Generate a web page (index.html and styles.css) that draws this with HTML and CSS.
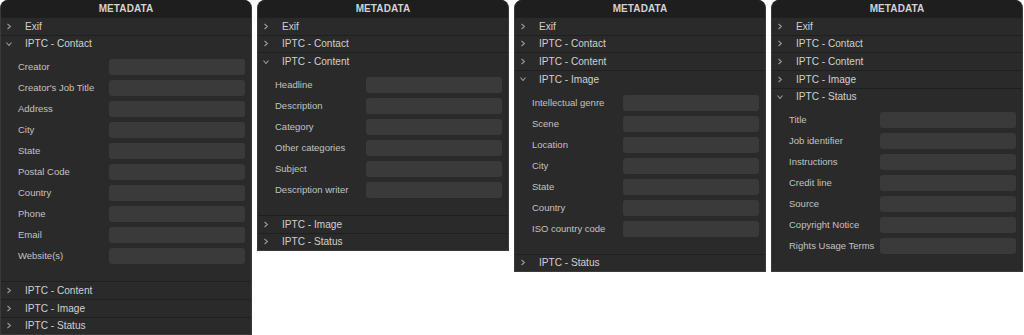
FILE: index.html
```html
<!DOCTYPE html>
<html>
<head>
<meta charset="utf-8">
<link rel="stylesheet" href="styles.css">
</head>
<body>
<div class="wrap">

  <section class="panel">
    <div class="hdr">METADATA</div>
    <div class="row"><svg class="chev" viewBox="0 0 4 6"><path d="M0.5 0.5 L3.5 3 L0.5 5.5"/></svg><span>Exif</span></div>
    <div class="row"><svg class="chev down" viewBox="0 0 6 4"><path d="M0.5 0.5 L3 3.5 L5.5 0.5"/></svg><span>IPTC - Contact</span></div>
    <div class="fields">
      <label>Creator</label><div class="box"></div>
      <label>Creator's Job Title</label><div class="box"></div>
      <label>Address</label><div class="box"></div>
      <label>City</label><div class="box"></div>
      <label>State</label><div class="box"></div>
      <label>Postal Code</label><div class="box"></div>
      <label>Country</label><div class="box"></div>
      <label>Phone</label><div class="box"></div>
      <label>Email</label><div class="box"></div>
      <label>Website(s)</label><div class="box"></div>
    </div>
    <div class="row"><svg class="chev" viewBox="0 0 4 6"><path d="M0.5 0.5 L3.5 3 L0.5 5.5"/></svg><span>IPTC - Content</span></div>
    <div class="row"><svg class="chev" viewBox="0 0 4 6"><path d="M0.5 0.5 L3.5 3 L0.5 5.5"/></svg><span>IPTC - Image</span></div>
    <div class="row"><svg class="chev" viewBox="0 0 4 6"><path d="M0.5 0.5 L3.5 3 L0.5 5.5"/></svg><span>IPTC - Status</span></div>
  </section>

  <section class="panel">
    <div class="hdr">METADATA</div>
    <div class="row"><svg class="chev" viewBox="0 0 4 6"><path d="M0.5 0.5 L3.5 3 L0.5 5.5"/></svg><span>Exif</span></div>
    <div class="row"><svg class="chev" viewBox="0 0 4 6"><path d="M0.5 0.5 L3.5 3 L0.5 5.5"/></svg><span>IPTC - Contact</span></div>
    <div class="row"><svg class="chev down" viewBox="0 0 6 4"><path d="M0.5 0.5 L3 3.5 L5.5 0.5"/></svg><span>IPTC - Content</span></div>
    <div class="fields">
      <label>Headline</label><div class="box"></div>
      <label>Description</label><div class="box"></div>
      <label>Category</label><div class="box"></div>
      <label>Other categories</label><div class="box"></div>
      <label>Subject</label><div class="box"></div>
      <label>Description writer</label><div class="box"></div>
    </div>
    <div class="row"><svg class="chev" viewBox="0 0 4 6"><path d="M0.5 0.5 L3.5 3 L0.5 5.5"/></svg><span>IPTC - Image</span></div>
    <div class="row"><svg class="chev" viewBox="0 0 4 6"><path d="M0.5 0.5 L3.5 3 L0.5 5.5"/></svg><span>IPTC - Status</span></div>
  </section>

  <section class="panel">
    <div class="hdr">METADATA</div>
    <div class="row"><svg class="chev" viewBox="0 0 4 6"><path d="M0.5 0.5 L3.5 3 L0.5 5.5"/></svg><span>Exif</span></div>
    <div class="row"><svg class="chev" viewBox="0 0 4 6"><path d="M0.5 0.5 L3.5 3 L0.5 5.5"/></svg><span>IPTC - Contact</span></div>
    <div class="row"><svg class="chev" viewBox="0 0 4 6"><path d="M0.5 0.5 L3.5 3 L0.5 5.5"/></svg><span>IPTC - Content</span></div>
    <div class="row"><svg class="chev down" viewBox="0 0 6 4"><path d="M0.5 0.5 L3 3.5 L5.5 0.5"/></svg><span>IPTC - Image</span></div>
    <div class="fields">
      <label>Intellectual genre</label><div class="box"></div>
      <label>Scene</label><div class="box"></div>
      <label>Location</label><div class="box"></div>
      <label>City</label><div class="box"></div>
      <label>State</label><div class="box"></div>
      <label>Country</label><div class="box"></div>
      <label>ISO country code</label><div class="box"></div>
    </div>
    <div class="row"><svg class="chev" viewBox="0 0 4 6"><path d="M0.5 0.5 L3.5 3 L0.5 5.5"/></svg><span>IPTC - Status</span></div>
  </section>

  <section class="panel">
    <div class="hdr">METADATA</div>
    <div class="row"><svg class="chev" viewBox="0 0 4 6"><path d="M0.5 0.5 L3.5 3 L0.5 5.5"/></svg><span>Exif</span></div>
    <div class="row"><svg class="chev" viewBox="0 0 4 6"><path d="M0.5 0.5 L3.5 3 L0.5 5.5"/></svg><span>IPTC - Contact</span></div>
    <div class="row"><svg class="chev" viewBox="0 0 4 6"><path d="M0.5 0.5 L3.5 3 L0.5 5.5"/></svg><span>IPTC - Content</span></div>
    <div class="row"><svg class="chev" viewBox="0 0 4 6"><path d="M0.5 0.5 L3.5 3 L0.5 5.5"/></svg><span>IPTC - Image</span></div>
    <div class="row"><svg class="chev down" viewBox="0 0 6 4"><path d="M0.5 0.5 L3 3.5 L5.5 0.5"/></svg><span>IPTC - Status</span></div>
    <div class="fields">
      <label>Title</label><div class="box"></div>
      <label>Job identifier</label><div class="box"></div>
      <label>Instructions</label><div class="box"></div>
      <label>Credit line</label><div class="box"></div>
      <label>Source</label><div class="box"></div>
      <label>Copyright Notice</label><div class="box"></div>
      <label>Rights Usage Terms</label><div class="box"></div>
    </div>
  </section>

</div>
</body>
</html>
```

FILE: styles.css
```css
html, body {
  margin: 0;
  padding: 0;
  background: #ffffff;
}

body {
  font-family: "Liberation Sans", Arial, sans-serif;
}

.wrap {
  display: flex;
  align-items: flex-start;
  gap: 5px;
}

.panel {
  width: 252px;
  box-sizing: border-box;
  background: #2a2a2a;
  border-radius: 8px 8px 0 0;
  overflow: hidden;
  border-left: 1px solid #3a3a3a;
  border-right: 1px solid #3a3a3a;
  border-bottom: 1px solid #3a3a3a;
}

.hdr {
  height: 17px;
  line-height: 18px;
  background: #1e1e1e;
  color: #d2d2d2;
  font-weight: bold;
  font-size: 10px;
  text-align: center;
  letter-spacing: 0.1px;
}

.row {
  height: 17.67px;
  box-sizing: border-box;
  border-top: 1px solid #1f1f1f;
  display: flex;
  align-items: center;
  color: #d0d0d0;
  font-size: 10.1px;
}

.chev {
  width: 4px;
  height: 7px;
  margin-left: 6px;
  margin-right: 14px;
  fill: none;
  stroke: #9a9a9a;
  stroke-width: 1.1;
}

.chev.down {
  width: 6px;
  height: 4px;
  margin-left: 5px;
  margin-right: 13px;
}

.fields {
  display: grid;
  grid-template-columns: 91px 136px;
  grid-auto-rows: 16px;
  row-gap: 5px;
  padding: 7px 7px 17px 17px;
}

.fields label {
  color: #c2c2c2;
  font-size: 9.5px;
  line-height: 16px;
  white-space: nowrap;
}

.box {
  background: #3a3a3a;
  border-radius: 3px;
}
```
